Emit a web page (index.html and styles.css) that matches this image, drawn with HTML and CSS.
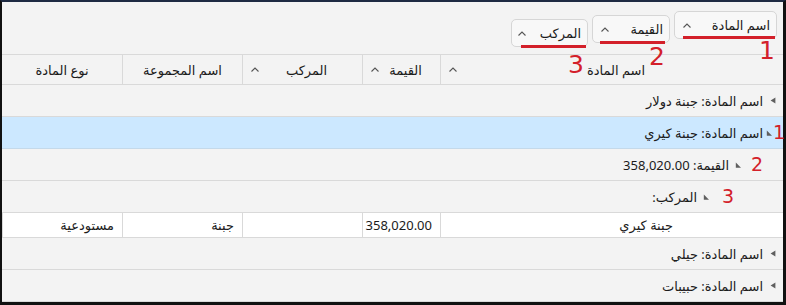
FILE: index.html
```html
<!DOCTYPE html>
<html lang="ar">

<head>
    <title>تجميع المواد</title>
    <meta charset="utf-8">
    <link rel="stylesheet" href="styles.css">
</head>

<body>
    <div class="frame" dir="rtl">

        <!-- منطقة التجميع -->
        <div class="group-panel">
            <div class="chip chip-1"><span>اسم المادة</span><svg class="caret" width="8" height="5" viewBox="0 0 8 5"><polyline points="0.5,4.5 4,1 7.5,4.5" /></svg></div>
            <div class="chip chip-2"><span>القيمة</span><svg class="caret" width="8" height="5" viewBox="0 0 8 5"><polyline points="0.5,4.5 4,1 7.5,4.5" /></svg></div>
            <div class="chip chip-3"><span>المركب</span><svg class="caret" width="8" height="5" viewBox="0 0 8 5"><polyline points="0.5,4.5 4,1 7.5,4.5" /></svg></div>
        </div>

        <!-- رأس الجدول -->
        <div class="head">
            <div class="hcell col-name"><span>اسم المادة</span><svg class="caret" width="8" height="5" viewBox="0 0 8 5"><polyline points="0.5,4.5 4,1 7.5,4.5" /></svg></div>
            <div class="hcell col-value"><span>القيمة</span><svg class="caret" width="8" height="5" viewBox="0 0 8 5"><polyline points="0.5,4.5 4,1 7.5,4.5" /></svg></div>
            <div class="hcell col-comp"><span>المركب</span><svg class="caret" width="8" height="5" viewBox="0 0 8 5"><polyline points="0.5,4.5 4,1 7.5,4.5" /></svg></div>
            <div class="hcell col-group"><span>اسم المجموعة</span></div>
            <div class="hcell col-type"><span>نوع المادة</span></div>
        </div>

        <div class="grow lvl-1">
            <i class="tri closed"></i><span>اسم المادة: جبنة دولار</span>
        </div>
        <div class="grow lvl-1 selected">
            <i class="tri open"></i><span>اسم المادة: جبنة كيري</span>
        </div>
        <div class="grow lvl-2">
            <i class="tri open"></i><span>القيمة: 358,020.00</span>
        </div>
        <div class="grow lvl-3">
            <i class="tri open"></i><span>المركب:</span>
        </div>

        <div class="drow">
            <div class="dcell col-name first">جبنة كيري</div>
            <div class="dcell col-value">358,020.00</div>
            <div class="dcell col-comp"></div>
            <div class="dcell col-group">جبنة</div>
            <div class="dcell col-type">مستودعية</div>
        </div>

        <div class="grow lvl-1">
            <i class="tri closed"></i><span>اسم المادة: جيلي</span>
        </div>
        <div class="grow lvl-1">
            <i class="tri closed"></i><span>اسم المادة: حبيبات</span>
        </div>
    </div>

    <!-- علامات الشرح الحمراء -->
    <div class="mark line-1"></div>
    <div class="mark line-2"></div>
    <div class="mark line-3"></div>
    <div class="num n-h1">1</div>
    <div class="num n-h2">2</div>
    <div class="num n-h3">3</div>
    <div class="num small n-r1">1</div>
    <div class="num small n-r2">2</div>
    <div class="num small n-r3">3</div>
</body>

</html>
```

FILE: styles.css
```css
body {
    margin: 0;
    position: relative;
    width: 786px;
    height: 305px;
    overflow: hidden;
    background: #111;
}

.frame {
    box-sizing: border-box;
    width: 786px;
    height: 305px;
    border-top: 2px solid #1e2a42;
    border-left: 2px solid #111;
    border-right: 3px solid #111;
    border-bottom: 3px solid #111;
    background: #f3f3f3;
    font-family: "Noto Sans", "DejaVu Sans", sans-serif;
    font-size: 13px;
    color: #1b1b1b;
}

.caret {
    fill: none;
    stroke: #555;
    stroke-width: 1.1;
    flex: none;
}

/* منطقة التجميع */
.group-panel {
    height: 52px;
    display: flex;
    align-items: flex-start;
    gap: 4px;
    padding-right: 6px;
}

.chip {
    box-sizing: border-box;
    height: 28px;
    display: flex;
    align-items: center;
    justify-content: space-between;
    padding: 0 6px 0 8px;
    background: #f8f8f8;
    border: 1px solid #d6d6d6;
    border-radius: 5px;
}

.chip-1 {
    width: 103px;
    margin-top: 9px;
}

.chip-2 {
    width: 78px;
    margin-top: 13px;
    padding-left: 8px;
}

.chip-3 {
    width: 77px;
    margin-top: 17px;
    padding-left: 6px;
}

/* رأس الجدول */
.head {
    display: flex;
    height: 31px;
    box-sizing: border-box;
    border-top: 1px solid #d9d9d9;
    border-bottom: 1px solid #d9d9d9;
}

.hcell {
    box-sizing: border-box;
    display: flex;
    align-items: center;
    padding: 0 8px 0 8px;
    border-left: 1px solid #d9d9d9;
}

.hcell span {
    flex: 1;
    text-align: center;
}

.col-name {
    width: 343px;
}

.col-value {
    width: 78px;
}

.col-comp {
    width: 120px;
}

.col-group {
    width: 120px;
}

.col-type {
    width: 120px;
    border-left: none;
}

/* صفوف التجميع */
.grow {
    height: 32px;
    box-sizing: border-box;
    display: flex;
    align-items: center;
    gap: 6px;
    border-bottom: 1px solid #d9d9d9;
}

.lvl-1 {
    padding-right: 6px;
}

.lvl-1.selected {
    padding-right: 9px;
    gap: 3px;
}

.lvl-2 {
    padding-right: 40px;
}

.lvl-3 {
    padding-right: 72px;
}

.selected {
    background: #cce8ff;
    border-bottom-color: #c4d9ea;
}

.tri {
    width: 8px;
    height: 8px;
    flex: none;
    background: #5f5f5f;
}

.tri.closed {
    clip-path: polygon(20% 50%, 80% 12%, 80% 88%);
}

.tri.open {
    clip-path: polygon(10% 90%, 10% 25%, 75% 90%);
}

/* صف البيانات */
.drow {
    display: flex;
    height: 25px;
    box-sizing: border-box;
    background: #fff;
    border-bottom: 1px solid #d9d9d9;
}

.dcell {
    box-sizing: border-box;
    display: flex;
    align-items: center;
    padding: 0 8px;
    border-left: 1px solid #d9d9d9;
}

.dcell.first {
    padding-right: 110px;
}

/* علامات الشرح */
.mark {
    position: absolute;
    height: 3px;
    background: #d3202a;
}

.line-1 {
    left: 683px;
    width: 92px;
    top: 36px;
}

.line-2 {
    left: 600px;
    width: 65px;
    top: 41px;
}

.line-3 {
    left: 521px;
    width: 65px;
    top: 45px;
}

.num {
    position: absolute;
    color: #d3202a;
    font-family: "DejaVu Sans", sans-serif;
    font-size: 25px;
    line-height: 1;
}

.num.small {
    font-size: 19px;
}

.n-h1 {
    left: 759px;
    top: 38px;
}

.n-h2 {
    left: 649px;
    top: 44px;
}

.n-h3 {
    left: 568px;
    top: 52px;
}

.n-r1 {
    left: 773px;
    top: 123px;
}

.n-r2 {
    left: 751px;
    top: 155px;
}

.n-r3 {
    left: 722px;
    top: 187px;
}
```
